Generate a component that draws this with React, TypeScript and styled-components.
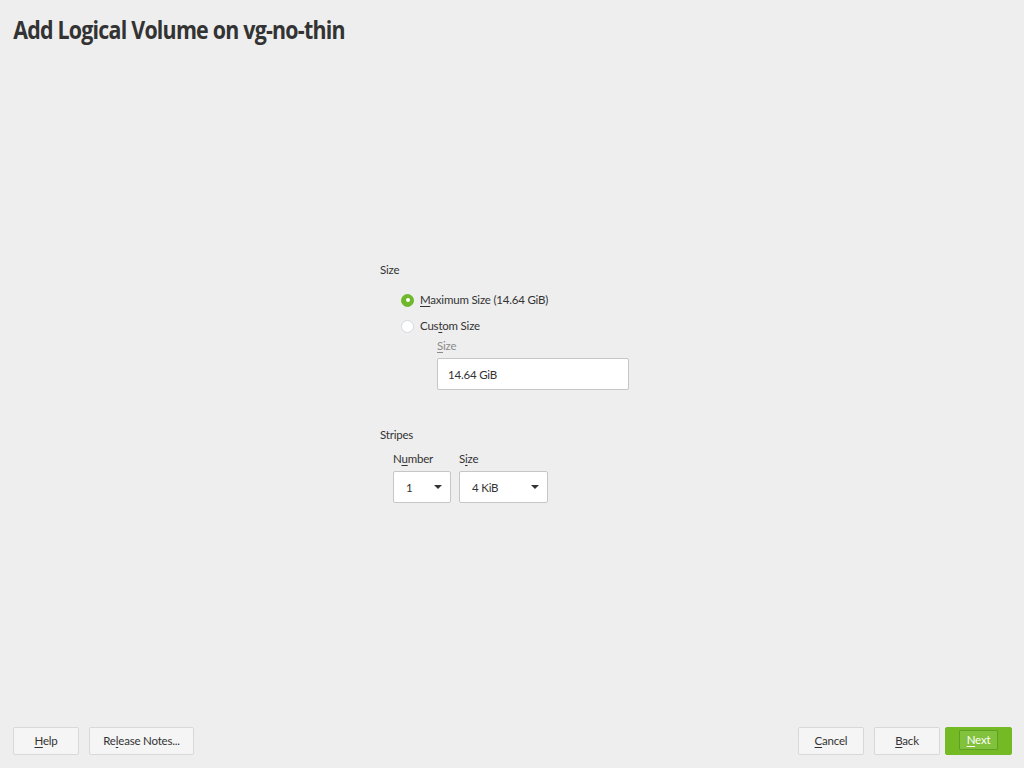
import React from "react";
import styled, { createGlobalStyle } from "styled-components";

const Global = createGlobalStyle`
  html, body { margin: 0; padding: 0; background: #eeeeee; }
  body { font-family: Lato, "Noto Sans", sans-serif; color: #333333; }
  * { box-sizing: border-box; }
`;

const Page = styled.div`
  width: 1024px;
  height: 768px;
  display: flex;
  flex-direction: column;
  overflow: hidden;
`;

const Title = styled.h1`
  margin: 0;
  padding: 12px 0 0 15.5px;
  height: 60px;
  font-family: "Open Sans", sans-serif;
  font-weight: 700;
  font-size: 25px;
  line-height: 34px;
  color: #333333;
  letter-spacing: -0.9px;
  transform: scaleX(0.855);
  transform-origin: left center;
  white-space: nowrap;
`;

const Main = styled.main`
  flex: 1;
  padding: 202px 0 0 380px;
  display: flex;
  flex-direction: column;
  font-size: 11.5px;
  letter-spacing: -0.2px;
`;

const FrameLabel = styled.div`
  line-height: 16px;
  height: 16px;
`;

const RadioList = styled.div`
  display: flex;
  flex-direction: column;
  padding: 14px 0 0 21px;
  gap: 10px;
`;

const RadioRow = styled.label`
  display: flex;
  align-items: center;
  gap: 6px;
  line-height: 16px;
`;

const RadioDot = styled.span<{ $checked?: boolean }>`
  width: 13px;
  height: 13px;
  border-radius: 50%;
  display: inline-flex;
  align-items: center;
  justify-content: center;
  background: ${(p) => (p.$checked ? "#6fb72b" : "#ffffff")};
  border: 1px solid ${(p) => (p.$checked ? "#6fb72b" : "#d6d9de")};
  &::after {
    content: "";
    width: 4px;
    height: 4px;
    border-radius: 50%;
    background: #ffffff;
    display: ${(p) => (p.$checked ? "block" : "none")};
  }
`;

const U = styled.span`
  text-decoration: underline;
  text-underline-offset: 2px;
`;

const Field = styled.div`
  display: flex;
  flex-direction: column;
  padding: 4px 0 0 57px;
`;

const FieldLabel = styled.div<{ $muted?: boolean }>`
  line-height: 16px;
  color: ${(p) => (p.$muted ? "#8a8a8a" : "#333333")};
  margin-bottom: 4px;
`;

const TextBox = styled.div`
  width: 192px;
  height: 32px;
  background: #ffffff;
  border: 1px solid #c6c6c6;
  border-radius: 2px;
  display: flex;
  align-items: center;
  padding-left: 10px;
`;

const StripesBlock = styled.div`
  margin-top: 37px;
  display: flex;
  flex-direction: column;
`;

const ComboRow = styled.div`
  display: flex;
  gap: 8px;
  padding: 8px 0 0 13px;
`;

const ComboCol = styled.div`
  display: flex;
  flex-direction: column;
`;

const Combo = styled.div<{ $w: number }>`
  width: ${(p) => p.$w}px;
  height: 32px;
  background: #ffffff;
  border: 1px solid #c6c6c6;
  border-radius: 2px;
  display: flex;
  align-items: center;
  justify-content: space-between;
  padding: 0 8px 0 12px;
`;

const Arrow = styled.span`
  width: 0;
  height: 0;
  border-left: 4px solid transparent;
  border-right: 4px solid transparent;
  border-top: 4px solid #333333;
`;

const Footer = styled.footer`
  display: flex;
  justify-content: space-between;
  align-items: center;
  padding: 0 12px 13px 13px;
`;

const ButtonGroup = styled.div`
  display: flex;
  gap: 10px;
`;

const Button = styled.button<{ $w: number; $primary?: boolean }>`
  width: ${(p) => p.$w}px;
  height: 28px;
  border-radius: 2px;
  border: 1px solid ${(p) => (p.$primary ? "#73ba25" : "#d8d8d8")};
  background: ${(p) => (p.$primary ? "#73ba25" : "#f5f5f5")};
  color: ${(p) => (p.$primary ? "#ffffff" : "#333333")};
  font-family: Lato, "Noto Sans", sans-serif;
  font-size: 11.5px;
  letter-spacing: -0.2px;
  display: flex;
  align-items: center;
  justify-content: center;
  padding: 0 0 2px 0;
  margin-left: ${(p) => (p.$primary ? "-5px" : "0")};
`;

const Focus = styled.span`
  border: 1px solid #5f9f24;
  background: #81c13c;
  padding: 2px 7px;
  border-radius: 1px;
  line-height: 14px;
`;

export default function App() {
  return (
    <>
      <Global />
      <Page>
        <Title>Add Logical Volume on vg-no-thin</Title>
        <Main>
          <FrameLabel>Size</FrameLabel>
          <RadioList>
            <RadioRow>
              <RadioDot $checked />
              <span>
                <U>M</U>aximum Size (14.64 GiB)
              </span>
            </RadioRow>
            <RadioRow>
              <RadioDot />
              <span>
                Cus<U>t</U>om Size
              </span>
            </RadioRow>
          </RadioList>
          <Field>
            <FieldLabel $muted>
              <U>S</U>ize
            </FieldLabel>
            <TextBox>14.64 GiB</TextBox>
          </Field>
          <StripesBlock>
            <FrameLabel>Stripes</FrameLabel>
            <ComboRow>
              <ComboCol>
                <FieldLabel>
                  N<U>u</U>mber
                </FieldLabel>
                <Combo $w={58}>
                  <span>1</span>
                  <Arrow />
                </Combo>
              </ComboCol>
              <ComboCol>
                <FieldLabel>
                  S<U>i</U>ze
                </FieldLabel>
                <Combo $w={89}>
                  <span>4 KiB</span>
                  <Arrow />
                </Combo>
              </ComboCol>
            </ComboRow>
          </StripesBlock>
        </Main>
        <Footer>
          <ButtonGroup>
            <Button $w={66}>
              <span>
                <U>H</U>elp
              </span>
            </Button>
            <Button $w={105}>
              <span>
                Re<U>l</U>ease Notes...
              </span>
            </Button>
          </ButtonGroup>
          <ButtonGroup>
            <Button $w={66}>
              <span>
                <U>C</U>ancel
              </span>
            </Button>
            <Button $w={66}>
              <span>
                <U>B</U>ack
              </span>
            </Button>
            <Button $w={67} $primary>
              <Focus>
                <U>N</U>ext
              </Focus>
            </Button>
          </ButtonGroup>
        </Footer>
      </Page>
    </>
  );
}
